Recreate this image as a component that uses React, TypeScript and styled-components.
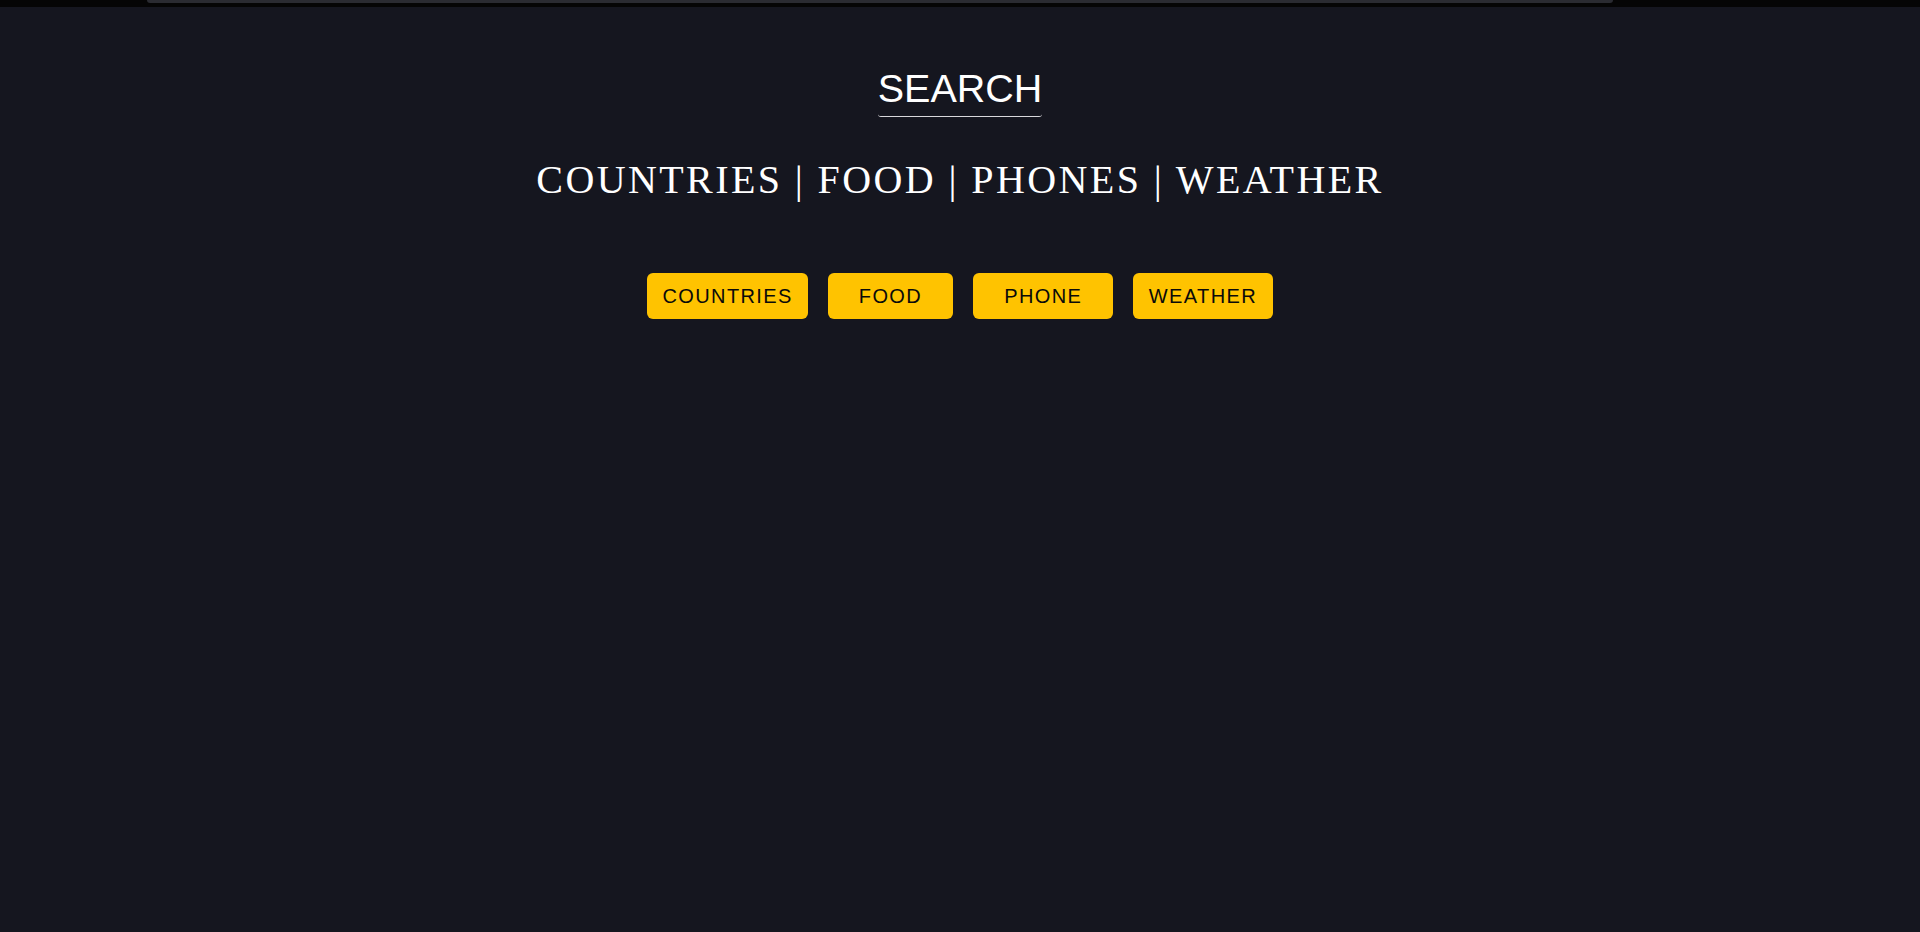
import React from "react";
import styled, { createGlobalStyle } from "styled-components";

const GlobalStyle = createGlobalStyle`
  html, body {
    margin: 0;
    padding: 0;
    background: #15161f;
  }
  body {
    min-height: 932px;
    font-family: "Liberation Sans", Arial, sans-serif;
  }
`;

const Page = styled.div`
  min-height: 932px;
  background: #15161f;
  display: flex;
  flex-direction: column;
`;

const TopStrip = styled.div`
  height: 7px;
  background: #050505;
  display: flex;
  justify-content: center;
  padding-left: 147px;
  padding-right: 307px;
  box-sizing: border-box;
`;

const TopBar = styled.div`
  flex: 1;
  height: 3px;
  background: #2a2b31;
  border-radius: 0 0 6px 6px;
`;

const Main = styled.main`
  display: flex;
  flex-direction: column;
  align-items: center;
`;

const Title = styled.h1`
  margin: 59px 0 0;
  padding: 0 0 5px;
  font-family: "Liberation Sans", Arial, sans-serif;
  font-weight: 400;
  font-size: 39.5px;
  line-height: normal;
  color: #ffffff;
  border-bottom: 1px solid #d8d8dc;
  border-radius: 3px;
`;

const Subtitle = styled.h2`
  margin: 39px 0 0;
  font-family: "Liberation Serif", "Times New Roman", serif;
  font-weight: 400;
  font-size: 40px;
  line-height: normal;
  letter-spacing: 2.4px;
  color: #ffffff;
`;

const ButtonRow = styled.div`
  display: flex;
  gap: 20px;
  margin-top: 70px;
`;

const CategoryButton = styled.button<{ $pad: number }>`
  height: 46px;
  padding: 0 ${(p) => p.$pad}px;
  background: #ffc300;
  color: #0a0a0a;
  border: none;
  border-radius: 6px;
  font-family: "Liberation Sans", Arial, sans-serif;
  font-size: 20px;
  letter-spacing: 1.4px;
  cursor: pointer;
`;

const buttons = [
  { label: "COUNTRIES", pad: 15 },
  { label: "FOOD", pad: 31 },
  { label: "PHONE", pad: 31 },
  { label: "WEATHER", pad: 15.5 },
];

export default function App() {
  return (
    <>
      <GlobalStyle />
      <Page>
        <TopStrip>
          <TopBar />
        </TopStrip>
        <Main>
          <Title>SEARCH</Title>
          <Subtitle>COUNTRIES | FOOD | PHONES | WEATHER</Subtitle>
          <ButtonRow>
            {buttons.map((b) => (
              <CategoryButton key={b.label} $pad={b.pad}>
                {b.label}
              </CategoryButton>
            ))}
          </ButtonRow>
        </Main>
      </Page>
    </>
  );
}
